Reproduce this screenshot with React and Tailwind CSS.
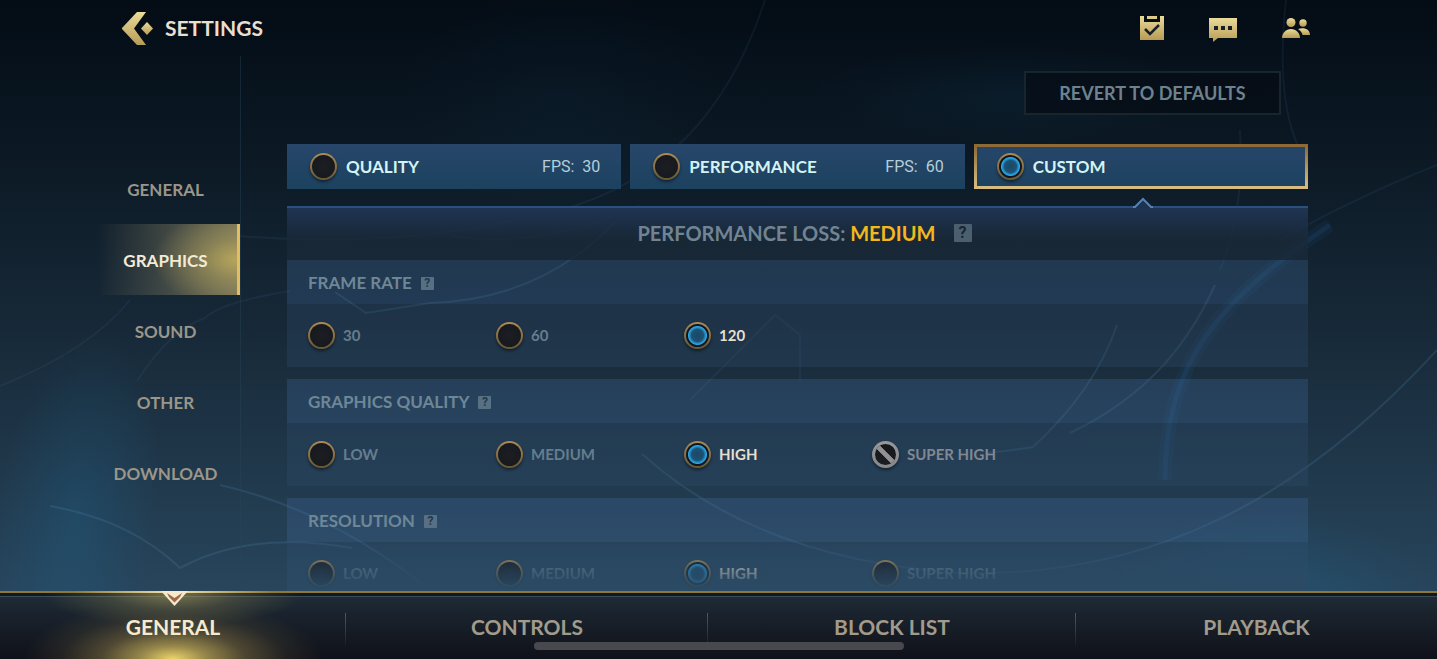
import React, { useState } from "react";

const sideItems = ["GENERAL", "GRAPHICS", "SOUND", "OTHER", "DOWNLOAD"];
const bottomItems = ["GENERAL", "CONTROLS", "BLOCK LIST", "PLAYBACK"];
const presets = [
  { name: "QUALITY", fps: 30 },
  { name: "PERFORMANCE", fps: 60 },
  { name: "CUSTOM" },
];
const groups = [
  { title: "FRAME RATE", options: ["30", "60", "120"], initial: "120" },
  {
    title: "GRAPHICS QUALITY",
    options: ["LOW", "MEDIUM", "HIGH", "SUPER HIGH"],
    initial: "HIGH",
    locked: "SUPER HIGH",
  },
  {
    title: "RESOLUTION",
    options: ["LOW", "MEDIUM", "HIGH", "SUPER HIGH"],
    initial: "HIGH",
  },
];

const Radio = (props) => (
  <input
    type="radio"
    className="peer size-[27px] shrink-0 cursor-pointer appearance-none rounded-full border-2 border-transparent shadow-[0_2px_3px_rgba(0,0,0,0.45)] [background:radial-gradient(#1c1e24,#14171c)_padding-box,linear-gradient(#ad8b57,#665632)_border-box] checked:[background:radial-gradient(circle,#1b4766_0,#1d5274_6px,#2492cc_8px,#2ba6e8_9px,#0b1620_10px,#0f1a22_12px)_padding-box,linear-gradient(#ad8b57,#665632)_border-box] disabled:border-3 disabled:cursor-not-allowed disabled:[background:linear-gradient(45deg,transparent_42%,#929294_43%,#929294_57%,transparent_58%)_padding-box,linear-gradient(#14171c,#1c1e24)_padding-box,linear-gradient(#98989a,#88888b)_border-box]"
    {...props}
  />
);

const Help = ({ label, large }) => (
  <button
    type="button"
    aria-label={label}
    className={
      large
        ? "flex size-[18px] items-center justify-center rounded-[1px] bg-[#4c5f6f] font-[Roboto] text-base font-bold leading-none text-[#182634]"
        : "flex size-[13px] items-center justify-center rounded-[1px] bg-[#587084] font-[Roboto] text-xs font-bold leading-none text-[#22384d]"
    }
  >
    ?
  </button>
);

const Backdrop = () => (
  <svg
    className="pointer-events-none absolute inset-0 size-full"
    viewBox="0 0 1437 659"
    preserveAspectRatio="none"
    fill="none"
    aria-hidden="true"
  >
    <defs>
      <radialGradient id="teal">
        <stop offset="0" stopColor="#1f6a96" stopOpacity="0.28" />
        <stop offset="1" stopColor="#1f6a96" stopOpacity="0" />
      </radialGradient>
    </defs>
    <ellipse
      cx="75"
      cy="520"
      rx="80"
      ry="190"
      fill="url(#teal)"
      transform="rotate(8 75 520)"
    />
    <ellipse cx="1270" cy="590" rx="160" ry="80" fill="url(#teal)" />
    <ellipse cx="1010" cy="95" rx="200" ry="50" fill="url(#teal)" opacity="0.35" />
    <ellipse cx="560" cy="100" rx="160" ry="120" fill="url(#teal)" opacity="0.2" />
    <g stroke="#5b93c4" strokeOpacity="0.09" strokeWidth="2">
      <path d="M0 386 Q90 350 130 300" />
      <path d="M137 381 Q170 330 205 318 Q222 302 290 291" />
      <path d="M240 236 Q410 250 560 210 T765 0" />
      <path d="M450 236 Q540 250 640 206" />
      <path d="M775 315 L800 335 V380 M775 315 L690 400" />
      <path d="M1286 0 Q1275 100 1300 150" />
      <path d="M1240 130 Q1245 210 1220 270" />
      <path d="M1280 240 Q1350 200 1437 165" />
    </g>
    <g stroke="#5b93c4" strokeOpacity="0.18" strokeWidth="2">
      <path d="M50 506 Q130 520 180 568 Q250 530 352 548" />
      <path d="M220 485 Q330 510 430 590" />
      <path d="M615 222 Q540 300 430 303 L366 313 L335 292" />
      <path d="M642 454 Q760 560 960 573 C1150 578 1300 500 1437 350" />
      <path d="M985 453 Q1015 450 1033 447 Q1095 390 1117 325" />
      <path d="M1070 433 C1150 395 1190 340 1215 285" />
    </g>
    <g stroke="#2b74b3">
      <path
        d="M1165 480 C1165 360 1220 300 1330 225"
        strokeOpacity="0.08"
        strokeWidth="14"
      />
      <path
        d="M1165 480 C1165 360 1220 300 1330 225"
        strokeOpacity="0.14"
        strokeWidth="5"
      />
    </g>
  </svg>
);

const App = () => {
  const [side, setSide] = useState("GRAPHICS");
  const [tab, setTab] = useState("GENERAL");
  return (
    <div className="relative flex h-screen flex-col overflow-hidden bg-linear-to-b from-[#040c15] via-[#172938] to-[#2c4d66] font-[Lato,sans-serif] font-bold">
      <Backdrop />
      <header className="relative flex h-14 shrink-0 items-center justify-between pr-[127px] pl-[122px]">
        <a href="#back" className="flex items-center gap-3 text-[21px] text-[#e9dfcf]">
          <svg className="h-[33px] w-[31px]" viewBox="0 0 31 33" aria-hidden="true">
            <defs>
              <linearGradient id="gold" x1="0" y1="0" x2="0" y2="1">
                <stop offset="0" stopColor="#eadb9a" />
                <stop offset="1" stopColor="#b79b55" />
              </linearGradient>
            </defs>
            <path d="M15 0h9L12 16.500l12 16.500H15L0 17v-1z" fill="url(#gold)" />
            <path d="M25 10l6 6.500-6 6.500-6-6.500z" fill="url(#gold)" />
          </svg>
          SETTINGS
        </a>
        <nav className="flex items-center gap-[45px]">
          <button type="button" aria-label="Missions">
            <svg className="h-6 w-6" viewBox="0 0 24 24">
              <path d="M0 0h4v6h16V0h4v24H0z" fill="url(#gold)" />
              <path d="M7 0h10v3H7z" fill="#ddcb8a" />
              <path d="M5 13l5 5 9-9" fill="none" stroke="#17202a" strokeWidth="2.500" />
            </svg>
          </button>
          <button type="button" aria-label="Chat">
            <svg className="mt-1 h-6 w-7" viewBox="0 0 28 24">
              <path d="M0 0h28v20H9l-5 4v-4H0z" fill="url(#gold)" />
              <path d="M5 8h4v4H5zM12 8h4v4h-4zM19 8h4v4h-4z" fill="#17202a" />
            </svg>
          </button>
          <button type="button" aria-label="Friends">
            <svg className="h-5 w-7" viewBox="0 0 28 20">
              <circle cx="9" cy="4.500" r="4.500" fill="url(#gold)" />
              <path d="M0 20c0-5 4-9 9-9s9 4 9 9z" fill="url(#gold)" />
              <circle cx="21" cy="5" r="3.700" fill="url(#gold)" />
              <path d="M16 11c7-2 12 1 12 6h-7.500c-.5-2.500-2-4.500-4.500-6z" fill="url(#gold)" />
            </svg>
          </button>
        </nav>
      </header>

      <div className="relative flex min-h-0 flex-1">
        <nav className="ml-[97px] flex w-36 shrink-0 flex-col border-r border-[#27465b]/40 pt-[97px]">
          {sideItems.map((item) => (
            <button
              key={item}
              type="button"
              onClick={() => setSide(item)}
              className={`flex h-[71px] shrink-0 items-center justify-center pt-0.5 pr-1.5 text-[17px] ${
                side === item
                  ? "border-r-3 border-[#e3bd61] bg-[radial-gradient(ellipse_60%_70%_at_100%_50%,#b5a55b_0%,#b5a55b80_40%,#b5a55b00_100%),linear-gradient(to_right,transparent,#6f6d58)] pl-[3px] text-[#f3ead8]"
                  : "text-[#9a9689]"
              }`}
            >
              {item}
            </button>
          ))}
        </nav>

        <main className="mr-[129px] ml-[46px] flex min-w-0 flex-1 flex-col pt-[15px]">
          <button
            type="button"
            className="mr-[27px] h-11 w-[257px] shrink-0 self-end border-2 border-[#17252f] bg-[#050c14]/70 text-lg text-[#6d828e]"
          >
            REVERT TO DEFAULTS
          </button>

          <div className="mt-[29px] grid shrink-0 grid-cols-3 gap-[9px]">
            {presets.map((preset) => (
              <label
                key={preset.name}
                className="flex h-[45px] cursor-pointer items-center gap-[9px] border-3 border-transparent bg-linear-to-b from-[#27466a] to-[#1c425f] bg-origin-border pr-[18px] pl-5 text-[17px] text-[#d3f3f5] has-checked:[border-image:linear-gradient(#8d6a35,#d9bd80)_1]"
              >
                <Radio
                  name="preset"
                  aria-label={preset.name}
                  defaultChecked={preset.name === "CUSTOM"}
                />
                <span className="flex-1">{preset.name}</span>
                {preset.fps && (
                  <span className="flex gap-2 font-[Roboto] text-base font-normal text-[#b5cfda]">
                    <span>FPS:</span>
                    <span>{preset.fps}</span>
                  </span>
                )}
              </label>
            ))}
          </div>

          {/* custom panel */}
          <div className="relative mt-[17px] flex min-h-0 flex-1 flex-col border-t-2 border-[#2c507d]">
            <svg
              className="absolute -top-[11px] right-[155px] h-[11px] w-5"
              viewBox="0 0 20 11"
              aria-hidden="true"
            >
              <path d="M0 11L10 1l10 10z" fill="#1d3350" />
              <path d="M0 10h2L10 2l8 8h2" fill="none" stroke="#5583b3" strokeWidth="2" />
            </svg>
            <div className="flex h-[52px] shrink-0 items-center justify-center gap-[18px] bg-linear-to-b from-[#1f3453] to-[#192938]/80 to-60% pb-0.5 pl-3.5">
              <h1 className="text-xl text-[#718493]">
                PERFORMANCE LOSS: <span className="text-[#f3b81e]">MEDIUM</span>
              </h1>
              <Help large label="About performance loss" />
            </div>
            <div className="flex min-h-0 flex-1 flex-col gap-3 overflow-hidden">
              {groups.map((group) => (
                <section key={group.title} className="shrink-0">
                  <div className="flex h-11 items-center gap-[9px] bg-[#42699a]/30 px-[21px] pt-0.5">
                    <h2 className="text-[17px] text-[#6e8797]">{group.title}</h2>
                    <Help label={`About ${group.title.toLowerCase()}`} />
                  </div>
                  <div className="grid h-[63px] grid-cols-5 items-center bg-[#335070]/30 pr-[60px] pl-[21px]">
                    {group.options.map((option) => (
                      <label key={option} className="flex cursor-pointer items-center gap-2">
                        <Radio
                          name={group.title}
                          aria-label={option}
                          defaultChecked={group.initial === option}
                          disabled={group.locked === option}
                        />
                        <span className="text-[15px] text-[#647e8e] peer-checked:text-[#e6dfd0] peer-disabled:text-[#818891]">
                          {option}
                        </span>
                      </label>
                    ))}
                  </div>
                </section>
              ))}
            </div>
            <div className="pointer-events-none absolute inset-x-0 bottom-0 h-12 bg-linear-to-b from-transparent to-[#2b4a64]" />
          </div>
        </main>
      </div>

      <footer className="relative h-[68px] shrink-0 border-t-2 border-[#8f7836] bg-linear-to-b from-[#1f2c37] to-[#0f1119]">
        <div className="h-1 border-b border-[#3b4855] bg-[#101820]" />
        <div className="pointer-events-none absolute inset-y-0 left-0 w-[346px] bg-[radial-gradient(ellipse_150px_58px_at_50%_100%,#ecd469,#c3ad5ac0_22%,#8a784680_48%,#6d613c33_75%,#6d613c00),radial-gradient(ellipse_130px_34px_at_50%_0%,#a69c5cb0,#a69c5c40_50%,#a69c5c00)]" />
        <div className="absolute -top-0.5 left-[74px] h-0.5 w-[200px] bg-linear-to-r from-transparent via-[#f5e6b0] to-transparent" />
        <svg
          className="absolute -top-0.5 left-[161px] h-[15px] w-[27px]"
          viewBox="0 0 27 15"
          aria-hidden="true"
        >
          <path d="M0 0h27L13.500 15z" fill="#f5ead0" />
          <path d="M6 2l7.500 5L21 2l-2 4-5.500 5.500L8 6z" fill="#a06b42" />
        </svg>
        <nav className="relative grid h-[62px] grid-cols-[346fr_362fr_368fr_361fr]">
          {bottomItems.map((item) => (
            <button
              key={item}
              type="button"
              onClick={() => setTab(item)}
              className={`relative pb-0.5 text-[21px] not-last:after:absolute not-last:after:right-0 not-last:after:top-4 not-last:after:h-9 not-last:after:w-px not-last:after:bg-linear-to-b not-last:after:from-[#59574f] not-last:after:to-transparent ${
                tab === item ? "text-[#f6ebd0]" : "text-[#a19b8b]"
              }`}
            >
              {item}
            </button>
          ))}
        </nav>
        <div className="absolute bottom-[9px] left-1/2 h-2 w-[370px] -translate-x-1/2 rounded-full bg-[#47494f]" />
      </footer>
    </div>
  );
};

export default App;
